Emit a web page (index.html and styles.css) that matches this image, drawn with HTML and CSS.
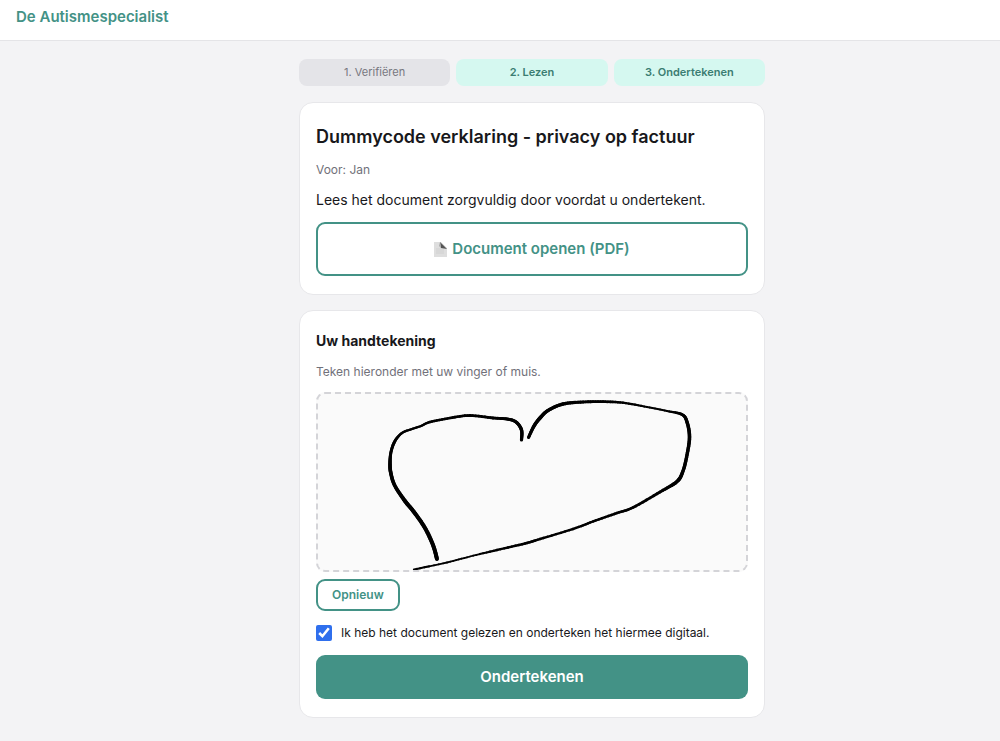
FILE: index.html
```
<!DOCTYPE html>
<html lang="nl">

<head>
    <meta charset="UTF-8">
    <meta name="viewport" content="width=device-width, initial-scale=1.0">
    <title>Document ondertekenen - De Autismespecialist</title>
    <link rel="stylesheet" href="styles.css">
</head>

<body>
    <header class="topbar">De Autismespecialist</header>

    <main class="page">
        <div class="container">
            <!-- Stappen -->
            <div class="steps">
                <div class="step">1. Verifiëren</div>
                <div class="step active">2. Lezen</div>
                <div class="step active">3. Ondertekenen</div>
            </div>

            <!-- Document -->
            <section class="card">
                <h1>Dummycode verklaring - privacy op factuur</h1>
                <p class="muted">Voor: Jan</p>
                <p class="intro">Lees het document zorgvuldig door voordat u ondertekent.</p>
                <a class="btn-document" href="#">
                    <svg class="doc-icon" viewBox="0 0 13 15" aria-hidden="true">
                        <path d="M0 0h7l6 6v9H0z" fill="#dedede" />
                        <path d="M2 7h8M2 9h8M2 11h8" stroke="#d0d0d0" fill="none" />
                        <path d="M6 0l7 7-6-1z" fill="#555" />
                        <path d="M6 0l1 6-2-2z" fill="#aaa" />
                    </svg>
                    Document openen (PDF)
                </a>
            </section>

            <!-- Handtekening -->
            <section class="card">
                <h2>Uw handtekening</h2>
                <p class="muted">Teken hieronder met uw vinger of muis.</p>
                <canvas id="pad" class="pad"></canvas>
                <button type="button" class="btn-clear" id="clear">Opnieuw</button>
                <div class="consent">
                    <input type="checkbox" id="agree" checked>
                    <label for="agree">Ik heb het document gelezen en onderteken het hiermee digitaal.</label>
                </div>
                <button type="submit" class="btn-submit">Ondertekenen</button>
            </section>
        </div>
    </main>

    <script src="signature.js"></script>
</body>

</html>
```
FILE: styles.css
```
* {
    box-sizing: border-box;
}

body {
    margin: 0;
    background: #f3f3f5;
    color: #18181b;
    font-family: Inter, "Liberation Sans", sans-serif;
    font-size: 14px;
    line-height: 20px;
}

.topbar {
    padding: 7px 16px 13px;
    background: #fff;
    border-bottom: 1px solid #e4e4e7;
    color: #439286;
    font-size: 15px;
    font-weight: 600;
}

.page {
    padding-left: 64px;
}

.container {
    max-width: 498px;
    margin: 0 auto;
    padding: 18px 16px;
}

/* Stappen */
.steps {
    display: flex;
    gap: 6px;
    margin-bottom: 16px;
}

.step {
    flex: 1;
    padding: 4px;
    border-radius: 8px;
    background: #e4e4e8;
    color: #77777f;
    font-size: 11px;
    line-height: 19px;
    text-align: center;
}

.step.active {
    background: #d5f8f0;
    color: #3b7d72;
    font-weight: 600;
}

.card {
    margin-bottom: 15px;
    padding: 20px 16px 18px;
    background: #fff;
    border: 1px solid #e7e7ea;
    border-radius: 14px;
}

h1 {
    margin: 0 0 9px;
    font-size: 18px;
    font-weight: 600;
    line-height: 28px;
}

h2 {
    margin: 0 0 11px;
    font-size: 14px;
    font-weight: 700;
    line-height: 20px;
}

p {
    margin: 0 0 10px;
}

.intro {
    margin-bottom: 12px;
}

.muted {
    color: #71717a;
    font-size: 12px;
}

/* Knoppen */
.btn-document {
    display: flex;
    align-items: center;
    justify-content: center;
    gap: 5px;
    padding: 15px;
    border: 2px solid #439286;
    border-radius: 9px;
    color: #439286;
    font-size: 15px;
    font-weight: 600;
    text-decoration: none;
}

.doc-icon {
    width: 13px;
    height: 15px;
}

button {
    font-family: inherit;
    cursor: pointer;
}

.btn-clear {
    display: block;
    padding: 4px 14px;
    border: 2px solid #439286;
    border-radius: 9px;
    background: #fff;
    color: #439286;
    font-size: 12px;
    font-weight: 600;
    line-height: 20px;
}

.btn-submit {
    display: block;
    width: 100%;
    padding: 12px;
    border: 0;
    border-radius: 9px;
    background: #439286;
    color: #fff;
    font-size: 15px;
    font-weight: 600;
    line-height: 20px;
}

/* Tekenvlak */
.pad {
    display: block;
    width: 100%;
    height: 180px;
    margin-bottom: 7px;
    border: 2px dashed #d4d4d8;
    border-radius: 9px;
    background: #fafafa;
    touch-action: none;
}

.consent {
    display: flex;
    align-items: center;
    gap: 9px;
    margin: 12px 0;
    font-size: 12px;
}

.consent input {
    width: 16px;
    height: 16px;
    margin: 0;
    accent-color: #2f6fed;
}
```
FILE: signature.js
```
const pad = document.getElementById("pad");
const ctx = pad.getContext("2d");

// punten per lijn: x, y, pendikte
let strokes = [
    [
        [119, 165, 4], [115, 151, 4], [107, 134, 4], [96, 118, 4], [87, 107, 4],
        [77, 92, 3.6], [73, 80, 3.6], [72, 70, 3.6], [73, 58, 3], [77, 47, 3],
        [84, 39, 2.4], [94, 35, 2.2], [103, 32, 2.2], [112, 28, 2.4], [132, 24, 2.6],
        [152, 21.5, 2.8], [175, 24, 2.8], [189, 25, 3], [198, 28, 3.2], [203.5, 36, 3.4], [203.5, 46, 3.2]
    ],
    [
        [210.5, 43.5, 3], [216, 32, 3.4], [222, 24, 3.6], [230, 16.5, 3.4], [245, 10, 3.4],
        [265, 8, 3], [285, 7.7, 2.8], [305, 8.7, 2.4], [329, 13, 2], [349, 17, 2],
        [364, 20.5, 2.8], [369, 28, 3.4], [371.5, 43, 3.6], [369, 61, 3.4], [365, 77, 3.4],
        [359, 87.5, 3.6], [342, 98, 3], [315, 113.5, 2.6], [299, 119, 2.6], [275, 127.5, 2.4],
        [255, 135, 2.4], [222, 145, 2.4], [207, 149.5, 2.6], [179, 156, 2.4], [152, 162.5, 1.8],
        [129, 168.5, 1.8], [96, 175.5, 2.2]
    ]
];

function spline(a, b, c, d, t) {
    return 0.5 * (2 * b + (c - a) * t + (2 * a - 5 * b + 4 * c - d) * t * t + (3 * b - a - 3 * c + d) * t * t * t);
}

function drawStroke(points) {
    for (let i = 0; i < points.length - 1; i++) {
        const p0 = points[i - 1] || points[i];
        const p1 = points[i];
        const p2 = points[i + 1];
        const p3 = points[i + 2] || p2;
        let x = p1[0];
        let y = p1[1];
        for (let s = 1; s <= 8; s++) {
            const t = s / 8;
            ctx.beginPath();
            ctx.moveTo(x, y);
            x = spline(p0[0], p1[0], p2[0], p3[0], t);
            y = spline(p0[1], p1[1], p2[1], p3[1], t);
            ctx.lineWidth = p1[2] + (p2[2] - p1[2]) * t;
            ctx.lineTo(x, y);
            ctx.stroke();
        }
    }
}

function redraw() {
    pad.width = pad.clientWidth;
    pad.height = pad.clientHeight;
    ctx.lineCap = "round";
    ctx.strokeStyle = "#000";
    strokes.forEach(drawStroke);
}

let drawing = false;

pad.addEventListener("pointerdown", e => {
    drawing = true;
    strokes.push([[e.offsetX, e.offsetY, 3]]);
});

pad.addEventListener("pointermove", e => {
    if (!drawing) return;
    strokes[strokes.length - 1].push([e.offsetX, e.offsetY, 3]);
    redraw();
});

window.addEventListener("pointerup", () => {
    drawing = false;
});

document.getElementById("clear").addEventListener("click", () => {
    strokes = [];
    redraw();
});

window.addEventListener("resize", redraw);
redraw();
```
